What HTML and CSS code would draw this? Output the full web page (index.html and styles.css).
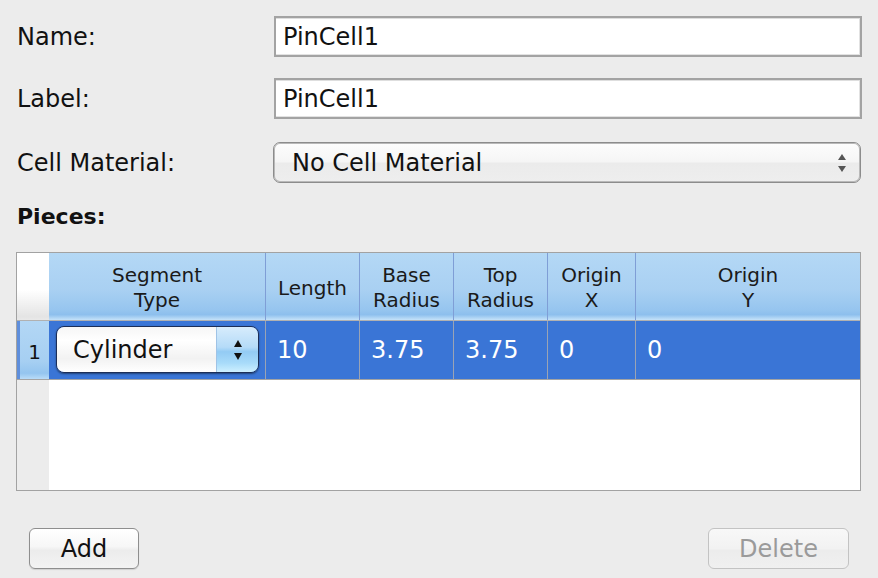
FILE: index.html
```html
<!DOCTYPE html>
<html>
<head>
<meta charset="utf-8">
<link rel="stylesheet" href="styles.css">
</head>
<body>
<div class="form">
  <div class="form-row">
    <div class="label">Name:</div>
    <div class="field text-field">PinCell1</div>
  </div>
  <div class="form-row row-label">
    <div class="label">Label:</div>
    <div class="field text-field">PinCell1</div>
  </div>
  <div class="form-row row-select">
    <div class="label">Cell Material:</div>
    <div class="field select-field">
      <span>No Cell Material</span>
      <svg class="select-arrows" width="10" height="20" viewBox="0 0 10 20"><path d="M5 1 L9 7 L1 7 Z" fill="#555"/><path d="M1 13 L9 13 L5 19 Z" fill="#555"/></svg>
    </div>
  </div>
</div>

<div class="section-title">Pieces:</div>

<div class="table">
  <div class="thead">
    <div class="th corner"></div>
    <div class="th first">Segment<br>Type</div>
    <div class="th">Length</div>
    <div class="th">Base<br>Radius</div>
    <div class="th">Top<br>Radius</div>
    <div class="th">Origin<br>X</div>
    <div class="th">Origin<br>Y</div>
  </div>
  <div class="trow">
    <div class="td rownum">1</div>
    <div class="td first">
      <div class="combo">
        <span class="combo-text">Cylinder</span>
        <span class="combo-arrows">
          <svg width="10" height="22" viewBox="0 0 10 22"><path d="M5 1 L9 8 L1 8 Z" fill="#111"/><path d="M1 14 L9 14 L5 21 Z" fill="#111"/></svg>
        </span>
      </div>
    </div>
    <div class="td">10</div>
    <div class="td">3.75</div>
    <div class="td">3.75</div>
    <div class="td">0</div>
    <div class="td">0</div>
  </div>
  <div class="tempty">
    <div class="empty-num"></div>
    <div class="empty-body"></div>
  </div>
</div>

<div class="buttons">
  <div class="btn">Add</div>
  <div class="btn disabled">Delete</div>
</div>
</body>
</html>
```
FILE: styles.css
```css
html, body {
  margin: 0;
  padding: 0;
}
body {
  background: #ececec;
  font-family: "DejaVu Sans", "Verdana", sans-serif;
  color: #111;
  width: 878px;
  height: 578px;
  overflow: hidden;
}
.form {
  padding: 16px 16px 0 17px;
}
.form-row {
  display: flex;
  align-items: center;
  height: 41px;
}
.row-label {
  margin-top: 21px;
}
.row-select {
  margin-top: 23px;
}
.label {
  width: 257px;
  font-size: 24px;
  line-height: 30px;
  flex: none;
}
.field {
  box-sizing: border-box;
  height: 41px;
  flex: 1;
  font-size: 24px;
  display: flex;
  align-items: center;
}
.text-field {
  background: #fff;
  border: 2px solid #a3a3a3;
  box-shadow: inset 0 1px 0 #dedede, inset -1px -1px 0 #e2e2e2;
  padding-left: 7px;
}
.select-field {
  margin-left: -1px;
  margin-right: 1px;
  border: 1px solid #8c8c8c;
  border-radius: 7px;
  background: linear-gradient(#fdfdfd, #f5f5f5 48%, #ebebeb 52%, #eeeeee);
  box-shadow: inset 0 0 0 1px #b9b9b9;
  padding-left: 18px;
  padding-right: 13px;
  justify-content: space-between;
}
.select-arrows {
  display: block;
}
.section-title {
  margin-top: 21px;
  padding-left: 17px;
  font-weight: bold;
  font-size: 22px;
  line-height: 26px;
  height: 26px;
}
.table {
  margin: 22px 0 0 16px;
  width: 845px;
  box-sizing: border-box;
  border: 1px solid #a2a2a2;
  background: #fff;
}
.thead, .trow, .tempty {
  display: grid;
  grid-template-columns: 32px 216px 94px 94px 94px 88px 225px;
}
.tempty {
  grid-template-columns: 32px 811px;
  height: 110px;
}
.thead {
  height: 68px;
  border-bottom: 1px solid #b1b1b1;
  box-sizing: border-box;
}
.th {
  box-sizing: border-box;
  border-left: 1px solid #7f9ed6;
  background: linear-gradient(#b4d8f5, #a9d0f2 55%, #96c5ef 85%, #8dbfed 92%, #c5e2f9 100%);
  font-size: 20px;
  line-height: 25px;
  color: #1a1a1a;
  text-align: center;
  display: flex;
  align-items: center;
  justify-content: center;
  padding-top: 3px;
}
.th.first {
  border-left: none;
}
.th.corner {
  border-left: none;
  background: linear-gradient(#ffffff, #ffffff 55%, #e4e4e4 95%, #e9e9e9);
}
.trow {
  height: 59px;
  box-sizing: border-box;
  border-bottom: 1px solid #a4a4a4;
}
.td {
  box-sizing: border-box;
  background: #3a75d6;
  color: #fff;
  font-size: 24px;
  border-left: 1px solid #9aa3b4;
  padding-left: 11px;
  display: flex;
  align-items: center;
}
.td.first {
  border-left: none;
  padding: 5px 6px 6px 7px;
  align-items: stretch;
}
.td.rownum {
  border-left: 3px solid #5f8fdc;
  background: linear-gradient(#b3d7f5, #a6cff2 70%, #94c5ef 90%, #b9dcf8);
  color: #111;
  font-size: 20px;
  padding: 4px 0 0 0;
  justify-content: center;
}
.combo {
  flex: 1;
  display: flex;
  border: 1px solid #1c2e57;
  border-radius: 8px;
  overflow: hidden;
  box-shadow: 0 1px 2px rgba(0, 0, 0, 0.45);
}
.combo-text {
  flex: 1;
  display: flex;
  align-items: center;
  padding-left: 16px;
  color: #111;
  font-size: 24px;
  background: linear-gradient(#f6f6f6, #ffffff 30%, #f7f7f7 55%, #f2f2f2 70%, #ffffff);
}
.combo-arrows {
  width: 41px;
  display: flex;
  align-items: center;
  justify-content: center;
  border-left: 1px solid #9fc3e6;
  background: linear-gradient(#d7ecfc, #b5dbf8 45%, #93cbf4 55%, #a8dbfa 80%, #cdf0ff);
}
.combo-arrows svg {
  display: block;
}
.empty-num {
  background: #ececec;
}
.empty-body {
  background: #fff;
}
.buttons {
  margin-top: 37px;
  padding: 0 29px;
  display: flex;
  justify-content: space-between;
}
.btn {
  box-sizing: border-box;
  height: 41px;
  width: 110px;
  border: 1px solid #8e8e8e;
  border-radius: 6px;
  background: linear-gradient(#ffffff, #f7f7f7 45%, #ececec 55%, #f3f3f3);
  box-shadow: 0 1px 1px rgba(0, 0, 0, 0.12);
  font-size: 24px;
  display: flex;
  align-items: center;
  justify-content: center;
  color: #111;
}
.btn.disabled {
  width: 141px;
  border-color: #c3c3c3;
  color: #9a9a9a;
  background: linear-gradient(#f8f8f8, #f2f2f2 50%, #ececec 55%, #f0f0f0);
  box-shadow: none;
}
```
